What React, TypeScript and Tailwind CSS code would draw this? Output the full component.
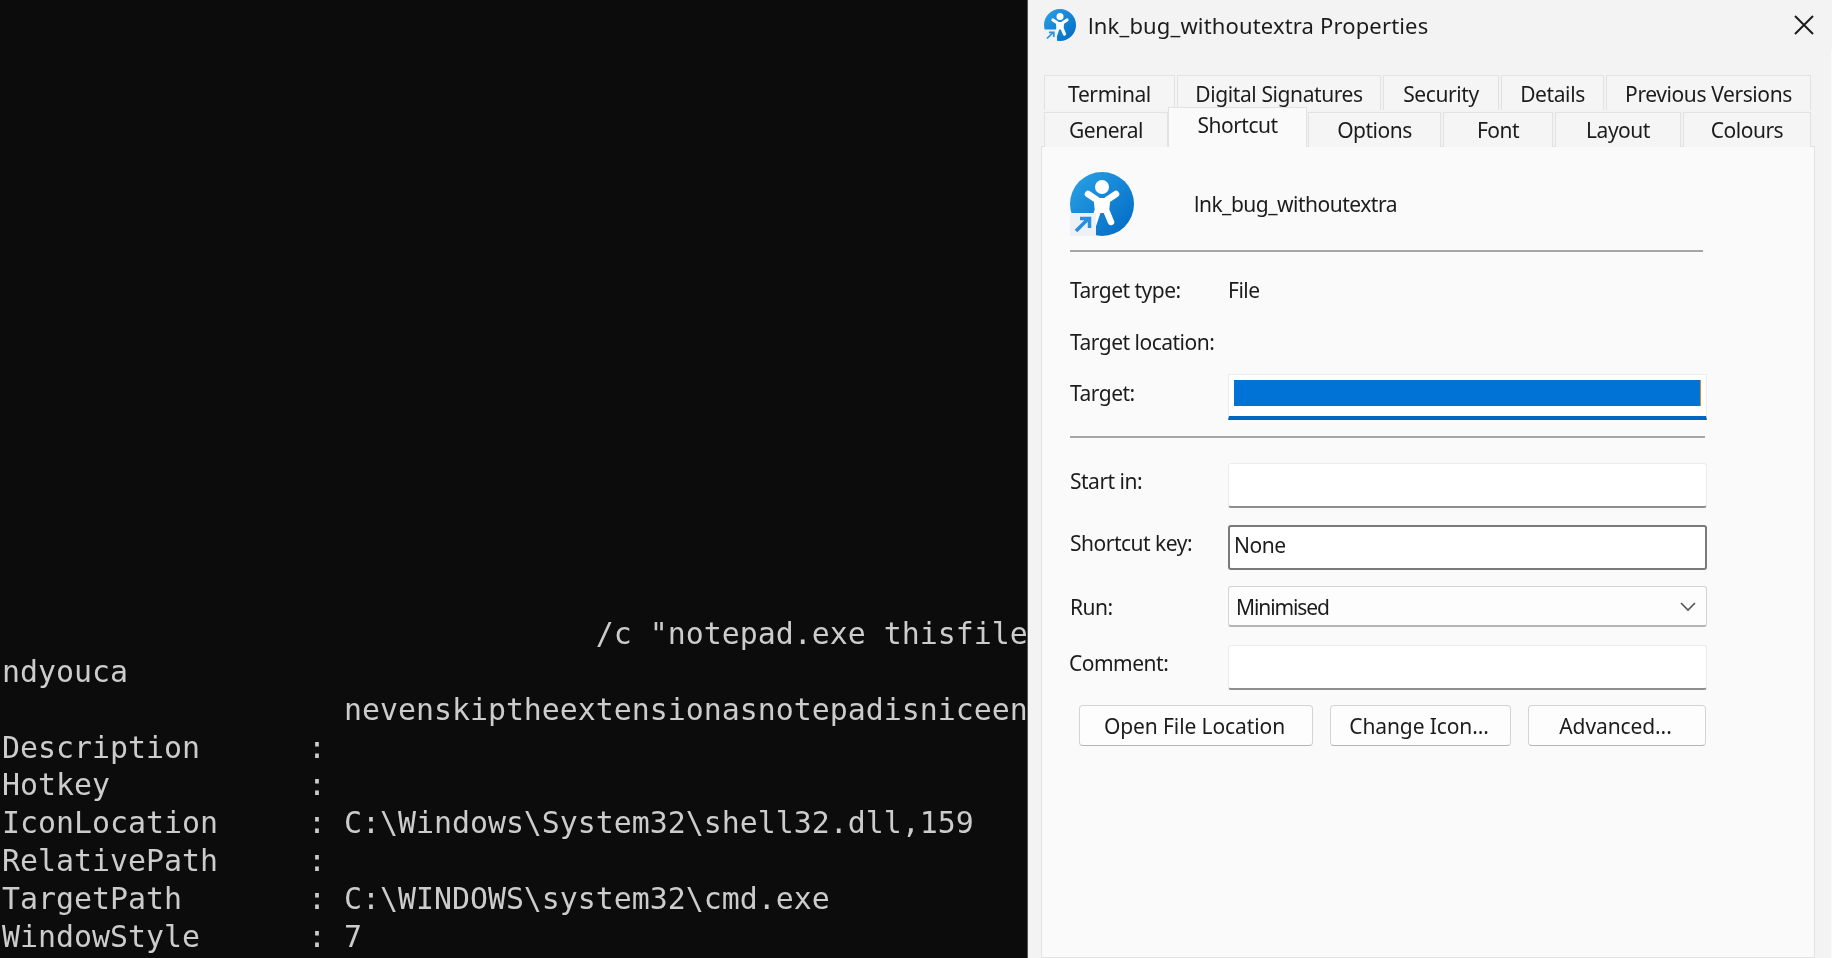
const consoleLines = [
  '                                 /c "notepad.exe thisfile',
  "ndyouca",
  "                   nevenskiptheextensionasnotepadisniceen",
  "Description      :",
  "Hotkey           :",
  "IconLocation     : C:\\Windows\\System32\\shell32.dll,159",
  "RelativePath     :",
  "TargetPath       : C:\\WINDOWS\\system32\\cmd.exe",
  "WindowStyle      : 7",
];

const topTabs = [
  { label: "Terminal", width: "w-[131px]" },
  { label: "Digital Signatures", width: "w-[204px]" },
  { label: "Security", width: "w-[116px]" },
  { label: "Details", width: "w-[103px]" },
  { label: "Previous Versions", width: "w-[205px]" },
];

const bottomTabs = [
  { label: "General", width: "w-[124px]" },
  { label: "Shortcut", width: "w-[139px] mr-[1px]", active: true },
  { label: "Options", width: "w-[133px] mr-[2px]" },
  { label: "Font", width: "w-[110px] mr-[2px]" },
  { label: "Layout", width: "w-[126px] mr-[2px]" },
  { label: "Colours", width: "w-[128px]" },
];

function ShortcutIcon({ id, className }: { id: string; className: string }) {
  return (
    <svg viewBox="0 0 64 64" className={className}>
      <defs>
        <linearGradient id={id} x1="0" y1="0" x2="1" y2="1">
          <stop offset="0" stopColor="#2aa3e6" />
          <stop offset="1" stopColor="#0068c4" />
        </linearGradient>
      </defs>
      <circle cx="32" cy="32" r="32" fill={`url(#${id})`} />
      <circle cx="32" cy="15" r="7" fill="#fff" />
      <path
        d="M18 22 L27 28 L28 38 L23 53 M46 22 L37 28 L36 38 L41 50"
        fill="none"
        stroke="#fff"
        strokeWidth="6.500"
        strokeLinecap="round"
        strokeLinejoin="round"
      />
      <path d="M26 26 H38 L38 41 H27 Z" fill="#fff" />
      <rect x="0" y="41" width="26" height="23" fill="#eef1f6" />
      <path
        d="M6 59 L18 47 M10 46.500 H19.500 V56"
        fill="none"
        stroke="#2a8fdc"
        strokeWidth="3.500"
      />
    </svg>
  );
}

function Tab({ label, width, active, top }: { label: string; width: string; active?: boolean; top?: boolean }) {
  if (active) {
    return (
      <div className={`${width} h-[40px] pb-[5px] bg-[#fafafa] border-x border-t border-[#e2e2e2] flex items-center justify-center`}>
        {label}
      </div>
    );
  }
  return (
    <div className={`${width} h-[35px] ${top ? "pt-[1px] tracking-[-0.4px]" : ""} bg-[#f5f5f5] border-x border-t border-[#e2e2e2] flex items-center justify-center`}>
      {label}
    </div>
  );
}

function Field({ label, className, labelClass, children }: { label: string; className: string; labelClass?: string; children: React.ReactNode }) {
  return (
    <div className={`flex ${className}`}>
      <div className={`w-[158px] shrink-0 ${labelClass ?? ""}`}>{label}</div>
      {children}
    </div>
  );
}

function ActionButton({ label, width }: { label: string; width: string }) {
  return (
    <div className={`${width} h-[41px] pr-[3px] tracking-[-0.1px] bg-[#fdfdfd] border border-[#d4d4d4] border-b-[#b5b5b5] rounded-[4px] flex items-center justify-center`}>
      {label}
    </div>
  );
}

export default function App() {
  return (
    <div className="h-[958px] w-[1832px] overflow-hidden flex bg-[#0c0c0c] blur-[0.4px]">
      {/* console */}
      <div className="w-[1027px] shrink-0 overflow-hidden flex flex-col justify-end pb-[2px] pl-[2px] font-['DejaVu_Sans_Mono',monospace] text-[29.9px] leading-[37.9px] text-[#cccccc] whitespace-pre">
        {consoleLines.map((line, i) => (
          <div key={i}>{line}</div>
        ))}
      </div>

      {/* properties dialog */}
      <div className="flex-1 bg-[#f3f3f3] border-l border-[#555] flex flex-col font-['Noto_Sans',sans-serif] text-[21px] tracking-[-0.5px] leading-[30px] text-[#1c1c1c]">
        <div className="h-[50px] shrink-0 flex items-center pl-[16px] pr-[18px]">
          <ShortcutIcon id="small" className="w-[32px] h-[32px]" />
          <div className="ml-[12px] text-[22px] tracking-[0.15px]">lnk_bug_withoutextra Properties</div>
          <svg viewBox="0 0 20 20" className="ml-auto w-[20px] h-[20px]">
            <path d="M1 1 L19 19 M19 1 L1 19" stroke="#1c1c1c" strokeWidth="2" fill="none" />
          </svg>
        </div>

        <div className="flex-1 flex flex-col pl-[13px] pr-[16px] border-r border-[#fafafa]">
          <div className="mt-[25px] pl-[3px] flex gap-[2px]">
            {topTabs.map((t) => (
              <Tab key={t.label} label={t.label} width={t.width} top />
            ))}
          </div>
          <div className="pl-[3px] mt-[-3px] flex items-end relative z-10 mb-[-1px]">
            {bottomTabs.map((t) => (
              <Tab key={t.label} label={t.label} width={t.width} active={t.active} />
            ))}
          </div>

          <div className="flex-1 bg-[#fafafa] border border-[#e2e2e2] pl-[28px] flex flex-col">
            <div className="mt-[24px] h-[65px] flex items-center">
              <ShortcutIcon id="large" className="w-[64px] h-[64px]" />
              <div className="ml-[60px]">lnk_bug_withoutextra</div>
            </div>
            <div className="mt-[14px] h-[2px] w-[633px] bg-[#a6a6a6]" />

            <div className="mt-[23px] h-[30px] flex">
              <div className="w-[158px]">Target type:</div>
              <div>File</div>
            </div>
            <div className="mt-[22px] h-[30px]">Target location:</div>

            <Field label="Target:" className="mt-[17px] h-[46px] items-start" labelClass="pt-[4px]">
              <div className="w-[479px] h-[46px] bg-white border-x border-t border-[#ececec] border-b-[4px] border-b-[#0067c0] pt-[5px] pl-[5px] pr-[5px]">
                <div className="h-[26px] bg-[#0173d7] border-r border-[#e08a20]" />
              </div>
            </Field>
            <div className="mt-[16px] h-[2px] w-[635px] bg-[#a6a6a6]" />

            <Field label="Start in:" className="mt-[25px] h-[45px] items-start" labelClass="pt-[3px]">
              <div className="w-[479px] h-[45px] bg-white border border-[#ececec] border-b-[2px] border-b-[#8e8e8e] rounded-[3px]" />
            </Field>
            <Field label="Shortcut key:" className="mt-[17px] h-[45px] items-start" labelClass="pt-[3px]">
              <div className="w-[479px] h-[45px] bg-white border-2 border-[#7a7a7a] rounded-[3px] pl-[4px] flex items-center pb-[5px]">None</div>
            </Field>
            <Field label="Run:" className="mt-[16px] h-[41px] items-center">
              <div className="w-[479px] h-[41px] pt-[1px] bg-[#fdfdfd] border border-[#d4d4d4] border-b-[2px] border-b-[#b5b5b5] rounded-[3px] pl-[7px] pr-[10px] flex items-center justify-between">
                <span className="tracking-[-1.1px]">Minimised</span>
                <svg viewBox="0 0 16 10" className="w-[16px] h-[10px]">
                  <path d="M1 1 L8 8 L15 1" stroke="#555" strokeWidth="1.600" fill="none" />
                </svg>
              </div>
            </Field>
            <Field label="Comment:" className="mt-[18px] h-[45px] items-start" labelClass="pt-[3px] ml-[-1px] mr-[1px]">
              <div className="w-[479px] h-[45px] bg-white border border-[#ececec] border-b-[2px] border-b-[#8e8e8e] rounded-[3px]" />
            </Field>

            <div className="mt-[15px] ml-[9px] flex gap-[17px]">
              <ActionButton label="Open File Location" width="w-[234px]" />
              <ActionButton label="Change Icon..." width="w-[181px]" />
              <ActionButton label="Advanced..." width="w-[178px]" />
            </div>
          </div>
        </div>
      </div>
    </div>
  );
}
